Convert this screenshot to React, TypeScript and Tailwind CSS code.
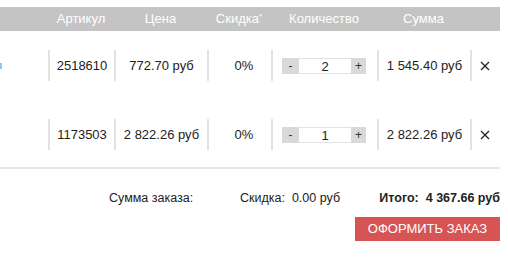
import { useState } from 'react';

type Item = { sku: string; price: string; discount: string; qty: number; sum: string };

const items: Item[] = [
  { sku: '2518610', price: '772.70 руб', discount: '0%', qty: 2, sum: '1 545.40 руб' },
  { sku: '1173503', price: '2 822.26 руб', discount: '0%', qty: 1, sum: '2 822.26 руб' },
];

function Qty({ value }: { value: number }) {
  return (
    <div className="flex h-4 w-[84px] items-stretch">
      <button className="w-[17px] bg-[#d9d9d9] text-[12px] leading-4 text-[#333]">-</button>
      <div className="flex-1 bg-white text-center text-[13px] leading-4 text-[#222] border-y border-[#e2e2e2]">{value}</div>
      <button className="w-[15px] bg-[#d9d9d9] text-[12px] leading-4 text-[#333]">+</button>
    </div>
  );
}

function Close() {
  return (
    <svg width="10" height="10" viewBox="0 0 10 10" className="text-[#222]">
      <path d="M1 1L9 9M9 1L1 9" stroke="currentColor" strokeWidth="1.3" />
    </svg>
  );
}

export default function App() {
  const [rows] = useState(items);

  return (
    <div className="h-[258px] w-[508px] overflow-hidden bg-white text-[13px] text-[#222]" style={{ fontFamily: '"Liberation Sans", Arial, sans-serif' }}>
      <div className="w-[500px] pt-[7px]">
        {/* Header */}
        <div className="flex h-6 items-center bg-[#c4c4c4] text-white">
          <div className="w-12" />
          <div className="w-[66px] text-center">Артикул</div>
          <div className="w-[93px] text-center">Цена</div>
          <div className="w-16 text-center">
            Скидка<span className="relative -top-[4px] text-[8px]">*</span>
          </div>
          <div className="w-[106px] text-center">Количество</div>
          <div className="w-[93px] text-center">Сумма</div>
          <div className="w-[30px]" />
        </div>

        {/* Rows */}
        <div className="border-b-2 border-[#e6e6e6]">
          {rows.map((r, i) => (
            <div key={r.sku} className={`flex items-center ${i === 0 ? 'pt-[19px] pb-[19px]' : 'pt-[19px] pb-[17px]'}`}>
              <div className="flex h-[31px] w-12 items-center">
                {i === 0 && <div className="h-[6px] w-[2px] bg-[#8cc8ee]" />}
              </div>
              <div className="flex h-[31px] w-[66px] items-center justify-center border-l-2 border-[#e2e2e2]">{r.sku}</div>
              <div className="flex h-[31px] w-[93px] items-center justify-center border-l-2 border-[#e2e2e2]">{r.price}</div>
              <div className="flex h-[31px] w-16 items-center justify-center border-l-2 border-[#e2e2e2] pl-2">{r.discount}</div>
              <div className="flex h-[31px] w-[106px] items-center border-l-2 border-[#e2e2e2] pl-[9px]">
                <Qty value={r.qty} />
              </div>
              <div className="flex h-[31px] w-[93px] items-center justify-center border-l-2 border-[#e2e2e2]">{r.sum}</div>
              <div className="flex h-[31px] w-[30px] items-center border-l-2 border-[#e2e2e2] pl-[8px]">
                <Close />
              </div>
            </div>
          ))}
        </div>

        {/* Totals */}
        <div className="flex items-center whitespace-nowrap pt-[20px] text-[12.5px]">
          <div className="w-[109px]" />
          <div className="w-[131px]">Сумма заказа:</div>
          <div className="w-[134px]">Скидка:&nbsp; 0.00 руб</div>
          <div className="flex-1 text-right font-bold">Итого:&nbsp; 4 367.66 руб</div>
        </div>

        <div className="flex justify-end pt-[9px]">
          <button className="h-6 w-[145px] bg-[#d75454] text-[13px] uppercase text-white">Оформить заказ</button>
        </div>
      </div>
    </div>
  );
}
